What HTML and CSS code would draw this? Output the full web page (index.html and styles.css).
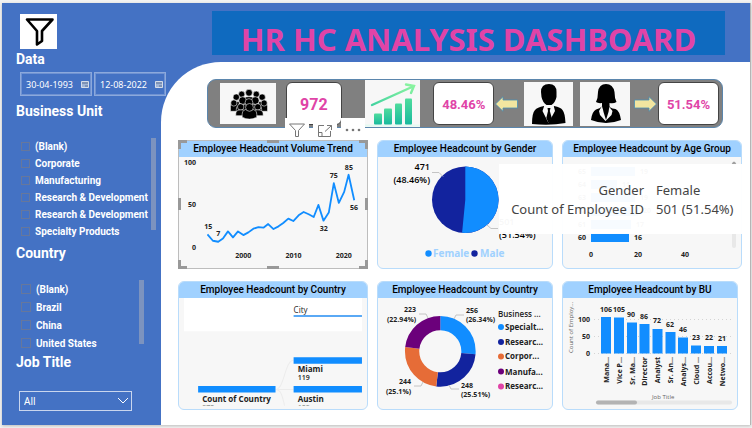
FILE: index.html
```
<!DOCTYPE html>
<html lang="en">
<head>
<meta charset="utf-8">
<title>HR HC Analysis Dashboard</title>
<link rel="stylesheet" href="styles.css">
</head>
<body>
<div class="report">
  <aside class="sidebar">
    <svg class="filter-logo" viewBox="0 0 37 35" aria-hidden="true"><path d="M7 5.500H32.500L22 17V27L17 30.500V17Z" fill="none" stroke="#000" stroke-width="2.600" stroke-linejoin="round"/></svg>
    <h2>Data</h2>
    <div class="dates">
      <label class="date"><input type="text" aria-label="Start date" value="30-04-1993"><svg viewBox="0 0 8 7"><path d="M.5.500h7v6h-7z" fill="#9fb4d6" stroke="#d5dce8"/><path d="M1 2h6M4 5h3" stroke="#5c7194"/></svg></label>
      <label class="date"><input type="text" aria-label="End date" value="12-08-2022"><svg viewBox="0 0 8 7"><path d="M.5.500h7v6h-7z" fill="#9fb4d6" stroke="#d5dce8"/><path d="M1 2h6M4 5h3" stroke="#5c7194"/></svg></label>
    </div>
    <h2>Business Unit</h2>
    <div class="slicer unit">
      <div class="options">
        <label><input type="checkbox">(Blank)</label>
        <label><input type="checkbox">Corporate</label>
        <label><input type="checkbox">Manufacturing</label>
        <label><input type="checkbox">Research &amp; Development</label>
        <label><input type="checkbox">Research &amp; Development</label>
        <label><input type="checkbox">Specialty Products</label>
      </div>
      <span class="thumb"></span>
    </div>
    <h2>Country</h2>
    <div class="slicer country">
      <div class="options">
        <label><input type="checkbox">(Blank)</label>
        <label><input type="checkbox">Brazil</label>
        <label><input type="checkbox">China</label>
        <label><input type="checkbox">United States</label>
      </div>
      <span class="thumb"></span>
    </div>
    <h2><label for="job">Job Title</label></h2>
    <div class="job">
      <select id="job"><option>All</option></select>
      <svg viewBox="0 0 12 8" aria-hidden="true"><path d="M1 1l5 5 5-5" fill="none" stroke="#fff"/></svg>
    </div>
  </aside>

  <main>
    <header><h1>HR HC ANALYSIS DASHBOARD</h1></header>
    <div class="canvas">
      <section class="kpis">
        <svg class="pic people" viewBox="0 0 56 42" aria-label="Employees">
          <g stroke="#f7f7f7" stroke-width=".6">
            <circle cx="21.500" cy="11.500" r="3.200"/><circle cx="36.500" cy="11.500" r="3.200"/><circle cx="29" cy="10" r="3.500"/>
            <circle cx="16" cy="14.500" r="3.300"/><circle cx="42.500" cy="14.500" r="3.300"/>
            <path d="M10 29v-5q0-5 5-5h4v10zM48 29v-5q0-5-5-5h-4v10z"/><path d="M23 24v-6q0-4 6-4t6 4v6z"/>
            <circle cx="22.500" cy="18" r="3.900"/><circle cx="35.500" cy="18" r="3.900"/>
            <path d="M16 31v-4q0-5 6.500-5t6.500 5v4zM42 31v-4q0-5-6.500-5T29 27v4z"/>
            <circle cx="13.500" cy="20.500" r="3.200"/><circle cx="44.500" cy="20.500" r="3.200"/><circle cx="29" cy="20" r="4"/>
            <circle cx="20.500" cy="24.500" r="3.300"/><circle cx="38" cy="24.500" r="3.300"/>
            <path d="M15.500 33.500v-2q0-4 5.500-4t5 4v2zM43.500 33.500v-2q0-4-5.500-4t-5 4v2z"/>
            <path d="M22 35v-3q0-5.500 7.500-5.500t7.500 5.500v3q-7.500 4-15 0z"/><circle cx="29.500" cy="25" r="4"/>
          </g>
        </svg>
        <div class="kpi total">972</div>
        <svg class="pic growth" viewBox="0 0 55 46" aria-label="Growth">
          <defs><linearGradient id="g" x1="0" y1="0" x2="0" y2="1"><stop offset="0" stop-color="#4fdc9d"/><stop offset="1" stop-color="#18b99d"/></linearGradient>
          <linearGradient id="a" x1="0" y1="1" x2="1" y2="0"><stop offset="0" stop-color="#42d3a0"/><stop offset="1" stop-color="#8df5a0"/></linearGradient></defs>
          <path d="M0 44h55v2H0z" fill="#e4faf1"/>
          <g fill="url(#g)"><rect x="9" y="33" width="8" height="11" rx="1"/><rect x="19" y="28" width="8" height="16" rx="1"/><rect x="30" y="23" width="7" height="21" rx="1"/><rect x="40" y="18" width="7" height="26" rx="1"/></g>
          <path d="M7 24.500L48 6M41 4l8 1.500-3 7" fill="none" stroke="url(#a)" stroke-width="2.400" stroke-linecap="round"/>
        </svg>
        <div class="kpi">48.46%</div>
        <svg class="arrow" viewBox="0 0 23 16" aria-hidden="true"><path d="M.5 8L8 .7V4H22.500v8H8v3.300z"/></svg>
        <svg class="pic" viewBox="0 0 49 44" aria-label="Male">
          <path d="M17 10q0-8 8-8 7.500 0 7.500 8v5q-1 5-5 8h-5q-4-3-5-8z"/>
          <path d="M8 42q0-11 3-14 2-2.500 9-4l5 4.500L30 24q7 1.500 8.500 4Q41 31 41.500 41 26 44 8 42z"/>
          <path d="M20.500 23l-2 6 6 12 6.500-12-1.500-6-5 3z" fill="#f7f7f7"/><path d="M23.500 26h3l-.7 3 2 7-3 5.500-2.500-5.500 1.700-7z"/>
        </svg>
        <svg class="pic" viewBox="0 0 50 44" aria-label="Female">
          <path d="M16 20q2-4 2-10 1-8 8-8t8.500 8q0 6 2 10-3 2-7 1v4q3 2 6 2 4 1.500 5.500 11-15 6-30 0 1-8.500 5-10.500 4-1 6-3v-3.500q-4 .5-6-1z"/>
          <path d="M22 24l-3 5 1 4 5.500 6 6-6 1-4-4-5-1 4q-2.500 3-4.500-.5z" fill="#f7f7f7"/><path d="M22.500 24h7l-1 6-2.500 8-2.500-8z"/>
        </svg>
        <svg class="arrow" viewBox="0 0 23 16" aria-hidden="true"><path d="M22.500 8L15 .7V4H.5v8H15v3.300z"/></svg>
        <div class="kpi">51.54%</div>
      </section>

      <div class="row first">
        <section class="card selected">
          <h3>Employee Headcount Volume Trend</h3>
          <svg class="chart" viewBox="179 157 187 110">
            <g class="lab"><text x="184" y="165">100</text><text x="188" y="207">50</text><text x="192" y="250">0</text>
            <text x="235" y="257">2000</text><text x="285" y="257">2010</text><text x="335" y="257">2020</text>
            <text x="204" y="229">15</text><text x="216" y="236">7</text><text x="319" y="231">32</text><text x="329" y="178">75</text><text x="344" y="170">85</text><text x="349" y="210">56</text></g>
            <path class="trend" d="M207.300 234L212.700 240.300L218 241.300L222.700 238L227.700 231L232.700 237L237.700 231L243 234.700L248 232L253 228.300L258 226.700L263 227.300L267.700 223.700L273 228.700L278 226L282.700 222.700L287.700 218.300L292.700 220.700L298 215L303 211.700L308 214L313 216.700L317.700 204.700L322.700 220.300L328 212.300L333 183L338 202.700L343.300 191.700L347.700 174.700L353.300 200"/>
          </svg>
          <i class="handle nw"></i><i class="handle n"></i><i class="handle ne"></i><i class="handle w"></i><i class="handle e"></i><i class="handle sw"></i><i class="handle s"></i><i class="handle se"></i>
          <div class="tools">
            <button aria-label="Filters"><svg viewBox="0 0 24 21"><path d="M4.500 6h15l-6 6.500v6h-3v-6z"/></svg></button>
            <button aria-label="Focus mode"><svg viewBox="0 0 24 21"><path d="M11 7.500H5.500v11h12V13M5.500 14.500H9v4M14 7.500h4.500V12M18.500 7.500L12 13.500"/></svg></button>
            <button aria-label="More options"><svg viewBox="0 0 24 21"><g fill="#767676" stroke="none"><circle cx="6" cy="12" r="1.300"/><circle cx="12" cy="12" r="1.300"/><circle cx="18" cy="12" r="1.300"/></g></svg></button>
          </div>
        </section>

        <section class="card">
          <h3>Employee Headcount by Gender</h3>
          <svg class="chart" viewBox="378 157 174 110">
            <circle cx="465.300" cy="199.700" r="33.300" fill="#12239e"/>
            <path d="M465.300 166.400A33.300 33.300 0 0 1 498.600 199.700A33.300 33.300 0 0 1 462.090 232.840L465.300 199.700z" fill="#118dff"/>
            <path class="lead" d="M432 172.500h7l4 4M487 225l4 3.500h7"/>
            <g class="pie-lab"><text x="430" y="170" class="end">471</text><text x="430" y="183" class="end">(48.46%)</text><text x="499" y="225">501</text><text x="499" y="238">(51.54%)</text></g>
            <circle cx="428.500" cy="253.500" r="3.200" fill="#118dff"/><circle cx="474.500" cy="253.500" r="3.200" fill="#12239e"/>
            <g class="legend"><text x="433" y="257">Female</text><text x="480" y="257">Male</text></g>
          </svg>
          <dl class="tooltip"><dt>Gender</dt><dd>Female</dd><dt>Count of Employee ID</dt><dd>501 (51.54%)</dd></dl>
        </section>

        <section class="card">
          <h3>Employee Headcount by Age Group</h3>
          <svg class="chart" viewBox="563 157 178 110">
            <g fill="#118dff"><path d="M591 167h44v9h-44zM591 180h26v9h-26zM591 193h44v9h-44zM591 207h47v9h-47zM591 220h40v9h-40zM591 233.500h38v8.500h-38z"/></g>
            <g class="lab"><text x="578" y="174">65</text><text x="578" y="187">64</text><text x="578" y="200">63</text><text x="578" y="213">62</text><text x="578" y="227">61</text><text x="578" y="240">60</text>
            <text x="640" y="174">19</text><text x="622" y="187">11</text><text x="640" y="200">19</text><text x="643" y="213">20</text><text x="636" y="227">17</text><text x="634" y="240">16</text>
            <text x="589" y="257">0</text><text x="634" y="257">20</text><text x="681" y="257">40</text></g>
            <rect x="732" y="163" width="4" height="85" rx="2" fill="#e8e8e8"/><path d="M731.500 164.500q2.500-6 5 0z" fill="#a0a0a0"/>
          </svg>
        </section>
      </div>

      <div class="row second">
        <section class="card">
          <h3>Employee Headcount by Country</h3>
          <svg class="chart" viewBox="179 298 187 111">
            <path d="M184 298h177v33H184z" fill="#fff"/>
            <text class="city" x="293" y="313">City</text><path d="M293 315h68v2h-68z" fill="#5aa9f5"/>
            <path d="M275 389c9 0 9-29 18-29M275 389h18M275 389c6 0 7 8 9 16" fill="none" stroke="#ececec"/>
            <path d="M293 357h68v6.500h-68zM293 385.500h68v6.500h-68zM198 385.500h77v6.500h-77z" fill="#118dff"/>
            <g class="tree"><text x="297" y="372">Miami</text><text x="297" y="380" class="num">119</text><text x="202" y="401">Count of Country</text><text x="297" y="401">Austin</text></g>
            <svg x="179" y="402" width="187" height="3" viewBox="179 402 187 3"><g class="tree num"><text x="202" y="409">972</text><text x="297" y="409">109</text></g></svg>
          </svg>
        </section>

        <section class="card">
          <h3>Employee Headcount by Country</h3>
          <svg class="chart" viewBox="378 298 174 111">
            <g fill="none" stroke-width="14.300" transform="rotate(-90 440.300 351.300)">
              <circle cx="440.300" cy="351.300" r="28.200" pathLength="100" stroke="#118dff" stroke-dasharray="26.340 100"/>
              <circle cx="440.300" cy="351.300" r="28.200" pathLength="100" stroke="#12239e" stroke-dasharray="25.510 100" stroke-dashoffset="-26.340"/>
              <circle cx="440.300" cy="351.300" r="28.200" pathLength="100" stroke="#e66c37" stroke-dasharray="25.100 100" stroke-dashoffset="-51.850"/>
              <circle cx="440.300" cy="351.300" r="28.200" pathLength="100" stroke="#6b007b" stroke-dasharray="23.050 100" stroke-dashoffset="-76.950"/>
            </g>
            <path class="lead" d="M419 314h7l2 4M464 315h-8l-2 4M414 386h7l2-4M459 389h-8l-2-4"/>
            <g class="lab"><text x="404" y="312">223</text><text x="387" y="322">(22.94%)</text><text x="466" y="313">256</text><text x="466" y="322">(26.34%)</text><text x="399" y="384">244</text><text x="386" y="394">(25.1%)</text><text x="461" y="388">248</text><text x="461" y="397">(25.51%)</text></g>
            <g class="tree"><text x="498" y="317" class="semi">Business ...</text><text x="505" y="330">Specialt...</text><text x="505" y="345">Researc...</text><text x="505" y="359">Corpor...</text><text x="505" y="375">Manufa...</text><text x="505" y="389">Researc...</text></g>
            <circle cx="501" cy="327" r="3" fill="#118dff"/><circle cx="501" cy="342" r="3" fill="#12239e"/><circle cx="501" cy="356.500" r="3" fill="#e66c37"/><circle cx="501" cy="371.500" r="3" fill="#6b007b"/><circle cx="501" cy="386.500" r="3" fill="#e044a7"/>
          </svg>
        </section>

        <section class="card">
          <h3>Employee Headcount by BU</h3>
          <svg class="chart" viewBox="563 298 174 111">
            <path d="M594 319.500h138M594 336.500h138M594 353.500h138" stroke="#d4d4d4" stroke-dasharray="1 3"/>
            <path fill="#118dff" d="M601 317h10v36.500h-10zM614 317.500h10v36h-10zM627 322.500h10v31h-10zM639.500 324h10v29.500h-10zM652.500 329h10v24.500h-10zM665.500 332h10v21.500h-10zM678 337.500h10v16h-10zM691 345.500h10v8h-10zM704 346h10v7.500h-10zM717 346h10v7.500h-10z"/>
            <g class="lab"><text x="578" y="322">100</text><text x="582" y="339">50</text><text x="586" y="356">0</text></g>
            <g class="lab mid"><text x="606" y="312">106</text><text x="619" y="312">105</text><text x="631" y="317">90</text><text x="644" y="319">86</text><text x="657" y="323">72</text><text x="670" y="327">62</text><text x="683" y="332">46</text><text x="696" y="340">23</text><text x="709" y="340">22</text><text x="722" y="341">21</text></g>
            <g class="cats"><text transform="translate(609 357) rotate(-90)">Mana...</text><text transform="translate(622 357) rotate(-90)">Vice P...</text><text transform="translate(635 357) rotate(-90)">Sr. Ma...</text><text transform="translate(647 357) rotate(-90)">Director</text><text transform="translate(660 357) rotate(-90)">Analyst</text><text transform="translate(673 357) rotate(-90)">Sr. An...</text><text transform="translate(686 357) rotate(-90)">Analys...</text><text transform="translate(699 357) rotate(-90)">Cloud ...</text><text transform="translate(712 357) rotate(-90)">Accou...</text><text transform="translate(725 357) rotate(-90)">Netwo...</text></g>
            <g class="axis"><text transform="translate(573 353) rotate(-90)">Count of Employ...</text><text x="652" y="399">Job Title</text></g>
            <rect x="596" y="400.500" width="136" height="4" rx="2" fill="#e8e8e8"/><rect x="596" y="400.500" width="41" height="4" rx="2" fill="#b3b3b3"/>
          </svg>
        </section>
      </div>
    </div>
  </main>
</div>
</body>
</html>
```
FILE: styles.css
```
* { box-sizing: border-box; }
body {
  margin: 0;
  padding: 3px 1px 4px 2px;
  background: #f3f3f2;
  font-family: "Open Sans", "Noto Sans", sans-serif;
  overflow: hidden;
}
h1, h2, h3, dl, dd { margin: 0; }
svg { display: block; }

.report {
  display: grid;
  grid-template-columns: 159px 1fr;
  background: #4472c4;
  border-right: 1px solid #b5b5b5;
  box-shadow: 0 1px 3px #bbb;
}

/* Sidebar */
.sidebar { position: relative; z-index: 1; padding: 11px 0 14px 14px; color: #fff; }
.filter-logo { width: 37px; height: 35px; margin-left: 4px; background: #fff; }
h2 { font: 700 14px/20px Roboto, sans-serif; }
.dates { display: flex; gap: 2px; width: 146px; margin: 3px 0 5px 4px; }
.date { display: flex; flex: 1; min-width: 0; align-items: center; height: 24px; border: 1px solid #8ca9dc; outline: 1px solid #6f92d2; outline-offset: -2px; padding: 0 2px 0 5px; }
.date input { flex: 1; min-width: 0; padding: 0; border: 0; background: none; color: #fff; font: 9px "Noto Sans", sans-serif; }
.date svg { width: 8px; height: 7px; }
.slicer { display: flex; justify-content: space-between; padding-left: 5px; font: 700 10px Roboto, sans-serif; white-space: nowrap; }
.options label { display: flex; align-items: center; }
.options input { appearance: none; width: 9px; height: 9px; margin: 0 5px 0 0; border: 1px solid #66779c; }
.unit { margin: 17px 5px 3px 0; }
.unit label { height: 17px; }
.country { margin: 17px 17px 0 0; }
.country label { height: 18px; }
.country input { width: 10px; height: 10px; }
.thumb { width: 5px; height: 92px; background: #7c93bf; }
.country .thumb { height: 64px; }
.job { position: relative; margin: 19px 29px 0 3px; }
.job select { appearance: none; display: block; width: 100%; height: 20px; padding: 0 4px; border: 1px solid #c9d6ee; border-radius: 0; background: none; color: #fff; font: 10px "Noto Sans", sans-serif; }
.job svg { position: absolute; right: 3px; top: 6px; width: 12px; height: 8px; }

/* Header */
main { display: flex; flex-direction: column; min-width: 0; }
header { padding: 8px 25px 7px 51px; }
h1 { height: 44px; background: #0f6abf; color: #e044a7; font: 700 31px/56px "Noto Sans", sans-serif; text-align: center; white-space: nowrap; }
.canvas { flex: 1; padding: 17px 0 14px 17px; background: #fff; border-top-left-radius: 60px; }

/* Key figures */
.kpis {
  display: grid;
  grid-template-columns: 56px 10fr 56px 23fr 55px 14fr 61px 1fr 23px 6fr 49px 7fr 50px 4fr 23px 1fr 61px;
  align-items: center;
  height: 49px;
  margin: 0 27px 0 29px;
  padding: 0 3px 0 12px;
  background: #808080;
  border: 1px solid #5b86ad;
  border-radius: 9px;
}
.kpis > :nth-child(2) { grid-column: 3; }
.kpis > :nth-child(3) { grid-column: 5; }
.kpis > :nth-child(4) { grid-column: 7; }
.kpis > :nth-child(5) { grid-column: 9; }
.kpis > :nth-child(6) { grid-column: 11; }
.kpis > :nth-child(7) { grid-column: 13; }
.kpis > :nth-child(8) { grid-column: 15; }
.kpis > :nth-child(9) { grid-column: 17; }
.pic { width: 100%; height: 44px; background: #f7f7f7; }
.people { height: 41px; }
.growth { height: 47px; }
.kpi { height: 43px; border: 1px solid #444; border-radius: 6px; background: #fff; color: #e044a7; font: 700 13px/43px Roboto, sans-serif; text-align: center; }
.total { font-size: 16px; }
.arrow { width: 23px; height: 16px; fill: #f2e6a0; stroke: #4a8fb5; stroke-width: .8; }

/* Cards */
.row { display: grid; gap: 9px; }
.first { grid-template-columns: 190fr 176fr 180fr; margin: 12px 8px 12px 0; }
.second { grid-template-columns: 190fr 176fr 176fr; margin-right: 12px; }
.card { position: relative; min-width: 0; background: #f7f7f7; border: 1px solid #b9dcfb; border-radius: 6px; }
.selected { border-color: #bdbdbd; border-radius: 0; }
h3 { height: 16px; background: #a0d1ff; border-radius: 5px 5px 0 0; color: #000; font: 500 10px/16px Roboto, sans-serif; text-align: center; white-space: nowrap; }
.selected h3 { border-radius: 0; }
.chart { width: 100%; height: auto; }
.handle { position: absolute; border: 0 solid #999; }
.nw, .ne, .sw, .se { width: 9px; height: 9px; }
.nw { left: -1px; top: -1px; border-width: 3px 0 0 3px; }
.ne { right: -1px; top: -1px; border-width: 3px 3px 0 0; }
.sw { left: -1px; bottom: -1px; border-width: 0 0 3px 3px; }
.se { right: -1px; bottom: -1px; border-width: 0 3px 3px 0; }
.n, .s { left: calc(50% - 6px); width: 12px; border-top-width: 3px; }
.n { top: -1px; }
.s { bottom: -1px; }
.w, .e { top: calc(50% - 6px); height: 12px; border-left-width: 3px; }
.w { left: -1px; }
.e { right: -1px; }
.tools { position: absolute; right: 2px; bottom: calc(100% + 2px); display: flex; gap: 4px; }
.tools button { width: 24px; height: 21px; padding: 0; border: 0; background: #fff; }
.tools svg { width: 24px; height: 21px; fill: none; stroke: #767676; }

/* Charts */
text { fill: #222; }
.lab, .cats { font-size: 7px; font-weight: 700; }
.mid { text-anchor: middle; }
.trend { fill: none; stroke: #118dff; stroke-width: 1.8; stroke-linejoin: round; }
.lead { fill: none; stroke: #c4c4c4; }
.pie-lab { font-size: 9px; font-weight: 600; }
.pie-lab text { fill: #000; }
.end, .cats { text-anchor: end; }
.legend { font-size: 10px; font-weight: 700; }
.legend text { fill: #a0d1ff; }
.tree { font-size: 8px; font-weight: 700; }
.tree .semi { font-weight: 600; }
.num { font-size: 7px; font-weight: 600; }
.city { font-size: 8px; }
.axis { font-size: 6px; }
.axis text { fill: #666; }
.tooltip {
  position: absolute;
  z-index: 2;
  left: 121px;
  top: 23px;
  display: grid;
  grid-template-columns: 145px auto;
  column-gap: 12px;
  width: 251px;
  padding: 17px 0 15px;
  background: rgba(255, 255, 255, .97);
  color: #444;
  font: 13px/19px "Noto Sans", sans-serif;
  white-space: nowrap;
}
dt { text-align: right; }
```
